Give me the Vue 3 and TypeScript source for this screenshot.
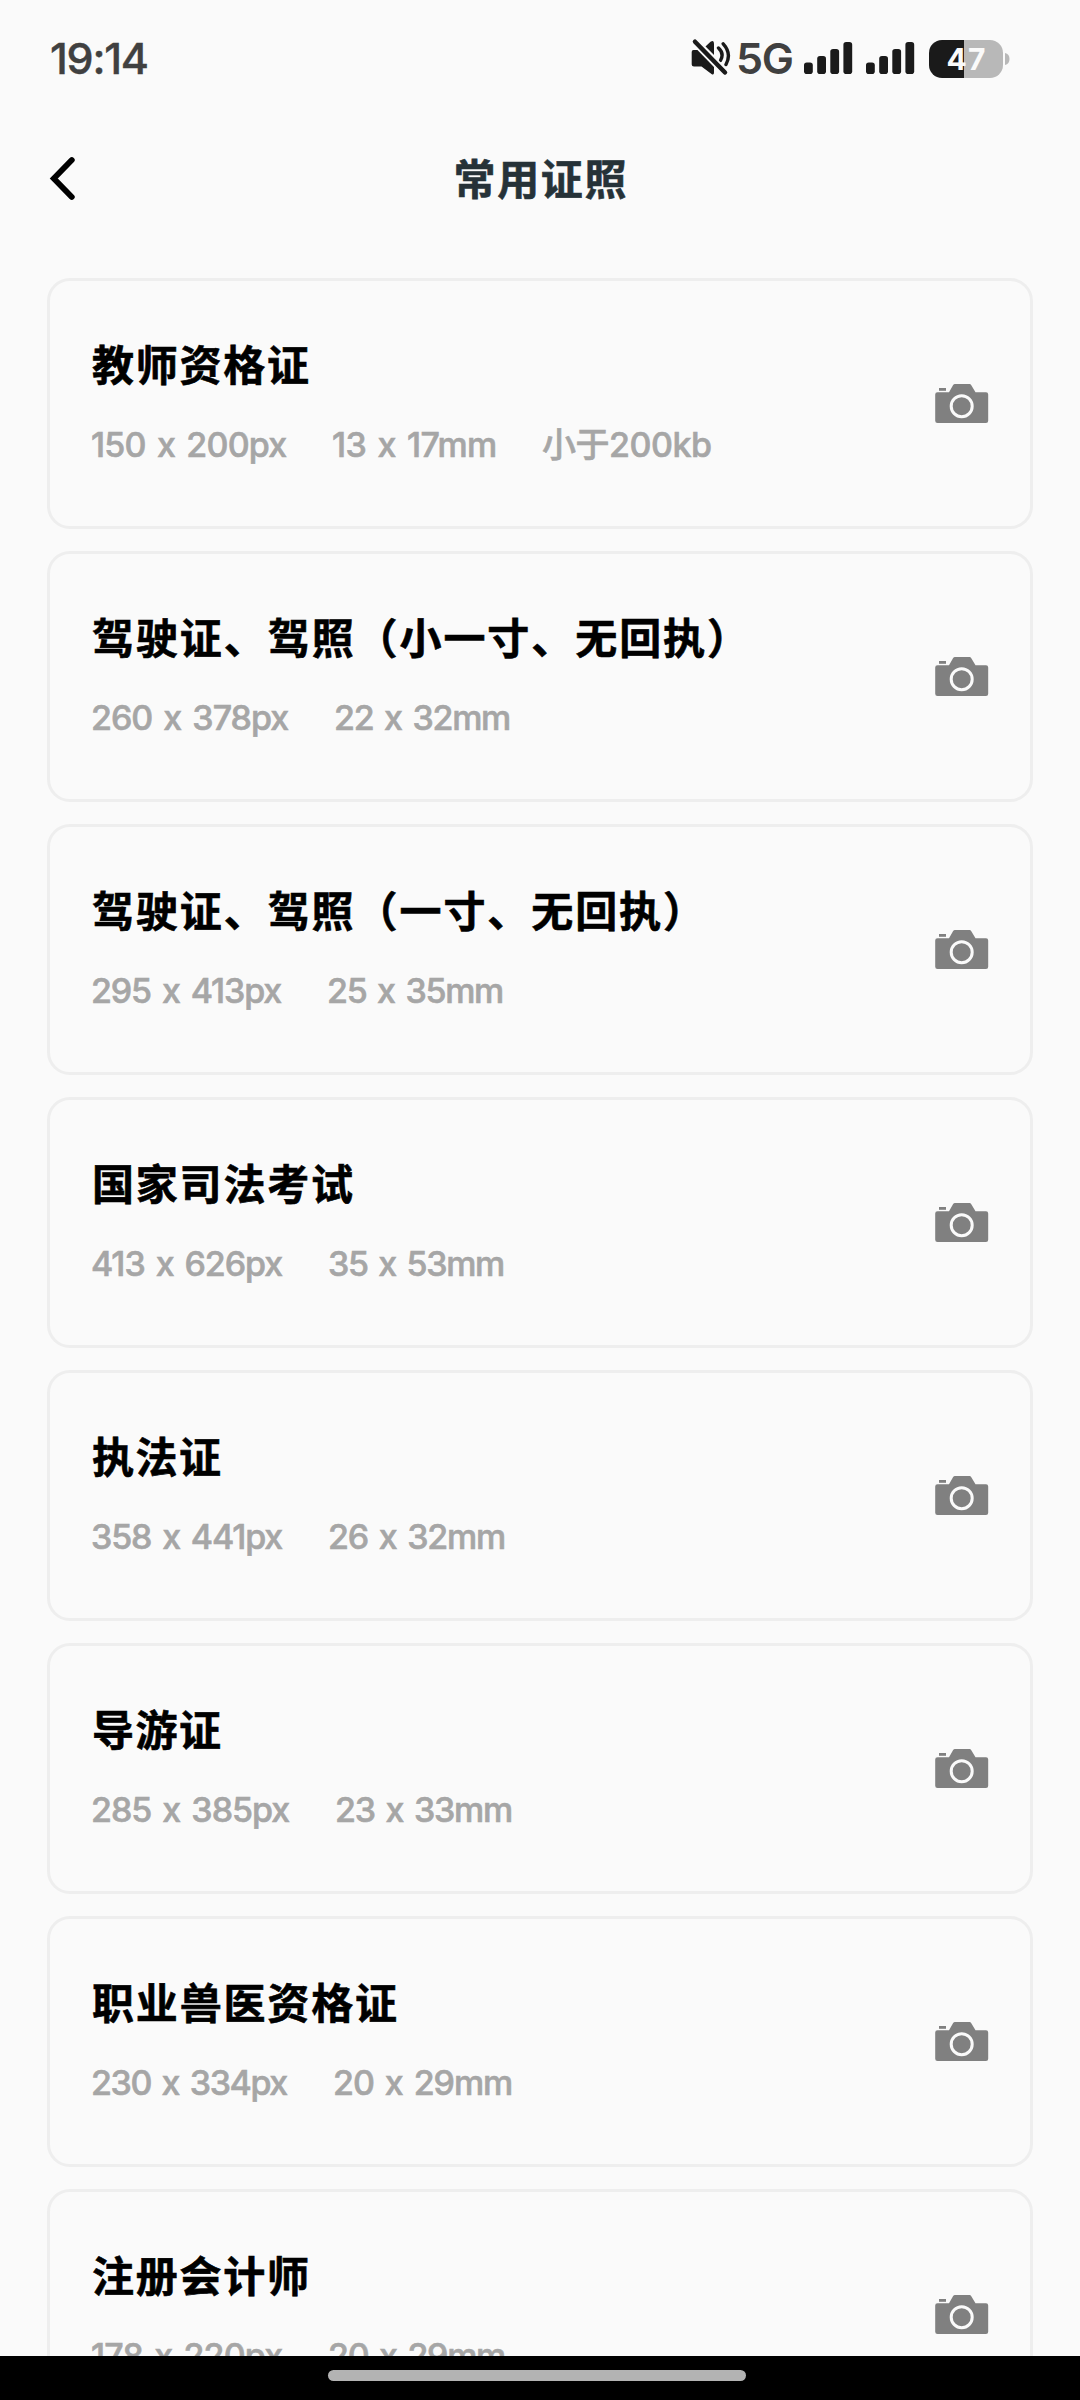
<script setup lang="ts">
interface Spec {
  text: string
  width: number
}
interface Licence {
  name: string
  width: number
  specs: Spec[]
}

const licences: Licence[] = [
  { name: '教师资格证', width: 217, specs: [{ text: '150 x 200px', width: 200 }, { text: '13 x 17mm', width: 169 }, { text: '小于200kb', width: 170 }] },
  { name: '驾驶证、驾照（小一寸、无回执）', width: 657, specs: [{ text: '260 x 378px', width: 202 }, { text: '22 x 32mm', width: 181 }] },
  { name: '驾驶证、驾照（一寸、无回执）', width: 613, specs: [{ text: '295 x 413px', width: 195 }, { text: '25 x 35mm', width: 181 }] },
  { name: '国家司法考试', width: 261, specs: [{ text: '413 x 626px', width: 196 }, { text: '35 x 53mm', width: 181 }] },
  { name: '执法证', width: 129, specs: [{ text: '358 x 441px', width: 196 }, { text: '26 x 32mm', width: 182 }] },
  { name: '导游证', width: 129, specs: [{ text: '285 x 385px', width: 203 }, { text: '23 x 33mm', width: 182 }] },
  { name: '职业兽医资格证', width: 305, specs: [{ text: '230 x 334px', width: 201 }, { text: '20 x 29mm', width: 184 }] },
  { name: '注册会计师', width: 217, specs: [{ text: '178 x 220px', width: 196 }, { text: '20 x 29mm', width: 182 }] },
]

const bars = [
  { x: 0, h: 11.5 },
  { x: 13.2, h: 18 },
  { x: 26.3, h: 25 },
  { x: 39.4, h: 32 },
]

// Spreads the glyphs of a label evenly over the given width.
const vFit = {
  mounted(el: HTMLElement, binding: { value: number }) {
    const range = document.createRange()
    range.selectNodeContents(el)
    const natural = range.getBoundingClientRect().width
    const gaps = (el.textContent ?? '').length - 1
    el.style.letterSpacing = `${(binding.value - natural) / gaps}px`
    el.style.width = `${binding.value}px`
  },
}
</script>

<template>
  <div class="screen">
    <div class="status">
      <span v-fit="99" class="time">19:14</span>
      <div class="indicators">
        <svg class="mute" width="41" height="38" viewBox="0 0 41 38">
          <path d="M3.500 12H10L24 25V34.500Q24 37.500 21.500 36L11.500 28.500H4Q1.700 28.500 1.700 26.500V14Q1.700 12 3.500 12Z" fill="#1a1a1a" />
          <path d="M15.500 8.500L20.500 3.800Q24 1.500 24 5.500V17Z" fill="#1a1a1a" />
          <path d="M28.500 10Q34.500 15.500 30.500 22.500M33.200 5.800Q42 15.500 36 26.500" fill="none" stroke="#1a1a1a" stroke-width="3.400" stroke-linecap="round" />
          <path d="M3 1.700L37 36.700" fill="none" stroke="#fafafa" stroke-width="8" />
          <path d="M5 3.700L35 34.500" fill="none" stroke="#1a1a1a" stroke-width="4.500" stroke-linecap="round" />
        </svg>
        <span v-fit="58" class="network">5G</span>
        <svg v-for="n in 2" :key="n" class="signal" width="49" height="32" viewBox="0 0 49 32">
          <rect v-for="bar in bars" :key="bar.x" :x="bar.x" :y="32 - bar.h" width="8.800" :height="bar.h" rx="2.800" fill="#1a1a1a" />
        </svg>
        <div class="battery"><span v-fit="39">47</span></div>
        <svg class="battery-tip" width="5" height="12" viewBox="0 0 5 12">
          <path d="M0 0Q4.500 1 4.500 6T0 12z" fill="#b8b8b8" />
        </svg>
      </div>
    </div>

    <header class="header">
      <svg class="back" width="28" height="46" viewBox="0 0 28 46">
        <path d="M23.800 5L5.800 23.500L23.800 42" fill="none" stroke="#000" stroke-width="5.800" stroke-linecap="round" />
      </svg>
      <h1 v-fit="173">常用证照</h1>
    </header>

    <main class="list">
      <article v-for="item in licences" :key="item.name" class="card">
        <div class="info">
          <h2 v-fit="item.width">{{ item.name }}</h2>
          <div class="specs">
            <span v-for="spec in item.specs" :key="spec.text" v-fit="spec.width">{{ spec.text }}</span>
          </div>
        </div>
        <svg class="camera" width="54" height="40" viewBox="0 0 54 40">
          <path d="M2.500 8.300H14L18 1.200Q18.700 0 20 0H34.500Q35.600 0 36.300 1.200L40.500 8.300H51Q53.200 8.300 53.200 10.500V36.800Q53.200 39 51 39H2.500Q0.200 39 0.200 36.800V10.500Q0.200 8.300 2.500 8.300Z" fill="#808080" />
          <path d="M4 4H11V6.800H4Z" fill="#808080" />
          <circle cx="26.700" cy="22.200" r="10.500" fill="none" stroke="#fafafa" stroke-width="3" />
        </svg>
      </article>
    </main>

    <div class="navbar"><div class="pill"></div></div>
  </div>
</template>

<style>
body {
  background: #fafafa;
}
</style>

<style scoped>
.screen {
  width: 1080px;
  height: 2400px;
  overflow: hidden;
  display: flex;
  flex-direction: column;
  background: #fafafa;
  font-family: Inter, "Noto Sans CJK SC", sans-serif;
}

.status {
  flex: none;
  height: 118px;
  box-sizing: border-box;
  padding: 0 70px 0 50px;
  display: flex;
  justify-content: space-between;
  color: #404040;
}

.time,
.network {
  display: block;
  white-space: nowrap;
  font-size: 43px;
  font-weight: 500;
  line-height: 52px;
  margin-top: 32px;
}

.time {
  -webkit-text-stroke: 0.4px #404040;
}

.network {
  margin-left: 5px;
  font-weight: 600;
}

.indicators {
  display: flex;
  align-items: flex-start;
}

.mute {
  margin-top: 38px;
}

.signal {
  margin: 42px 0 0 10px;
}

.signal + .signal {
  margin-left: 13px;
}

.battery {
  width: 74px;
  height: 38px;
  margin: 40px 2px 0 14px;
  border-radius: 13px;
  display: flex;
  justify-content: center;
  background: linear-gradient(90deg, #1a1a1a 35px, #b8b8b8 35px);
  color: #fafafa;
  font-size: 30px;
  font-weight: 700;
  line-height: 38px;
}

.battery-tip {
  margin-top: 53px;
}

.header {
  flex: none;
  height: 120px;
  box-sizing: border-box;
  padding: 0 48px;
  display: flex;
  align-items: center;
  justify-content: space-between;
}

.header::after {
  content: "";
  width: 28px;
}

h1,
h2 {
  margin: 0;
  font-family: "Noto Sans CJK SC", sans-serif;
  font-size: 42px;
  font-weight: 700;
  line-height: 50px;
  white-space: nowrap;
}

h1 {
  margin-bottom: 3px;
  color: #263238;
  -webkit-text-stroke: 0.6px #263238;
}

h2 {
  color: #000;
  -webkit-text-stroke: 0.6px #000;
}

.list {
  flex: 1;
  min-height: 0;
  overflow: hidden;
  padding: 40px 47px 0;
  display: flex;
  flex-direction: column;
  gap: 22px;
}

.card {
  flex: none;
  height: 251px;
  box-sizing: border-box;
  border: 3px solid #eee;
  border-radius: 23px;
  padding: 0 40px 0 41px;
  display: flex;
  align-items: center;
  justify-content: space-between;
}

.info {
  display: flex;
  flex-direction: column;
  gap: 37px;
  margin-bottom: 4px;
}

.info h2 {
  margin-left: 1px;
}

.specs {
  display: flex;
  gap: 41px;
  color: #a6a6a6;
  font-size: 34px;
  font-weight: 500;
  line-height: 40px;
  word-spacing: 3px;
  white-space: nowrap;
  -webkit-text-stroke: 0.6px #a6a6a6;
}

.specs span {
  display: block;
}

.camera {
  margin-right: 1px;
}

.navbar {
  flex: none;
  height: 44px;
  display: flex;
  justify-content: center;
  background: #000;
}

.pill {
  width: 418px;
  height: 11px;
  margin: 14px 6px 0 0;
  border-radius: 6px;
  background: #b3b3b3;
}
</style>
